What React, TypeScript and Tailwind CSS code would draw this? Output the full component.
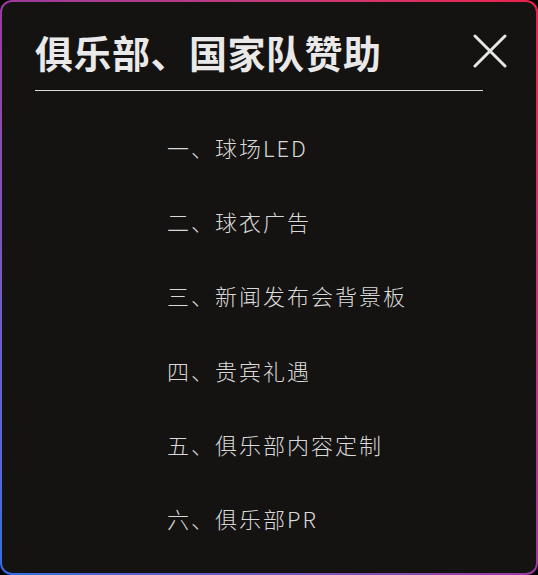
import React from "react";

const items = [
  "一、球场LED",
  "二、球衣广告",
  "三、新闻发布会背景板",
  "四、贵宾礼遇",
  "五、俱乐部内容定制",
  "六、俱乐部PR",
];

export default function App() {
  return (
    <div className="w-[538px] h-[575px] bg-black">
      <div className="w-[538px] h-[575px] rounded-[12px] p-[2px] bg-gradient-to-bl from-[#ee1f4a] via-[#9b3a9e] to-[#2f6fe6]">
        <div
          className="w-full h-full rounded-[10px] bg-[#141312] overflow-hidden"
          style={{ fontFamily: '"Noto Sans CJK SC", "Noto Sans", sans-serif' }}
        >
          <div className="flex items-center justify-between pl-[33px] pr-[29px] pt-[24px] h-[76px]">
            <h1 className="text-[38px] font-bold leading-none text-[#e9e9e9] tracking-[0.5px]">
              俱乐部、国家队赞助
            </h1>
            <svg width="34" height="34" viewBox="0 0 34 34" className="text-[#e6e6e6] -mt-[3px]">
              <path d="M2 2 L32 32 M32 2 L2 32" stroke="currentColor" strokeWidth="3" strokeLinecap="round" />
            </svg>
          </div>
          <div className="ml-[33px] mt-[12px] w-[448px] h-px bg-[#dcdcdc]" />
          <ul className="pl-[165px] pt-[46px]">
            {items.map((t) => (
              <li
                key={t}
                className="h-[74.2px] leading-[20px] text-[22px] font-light tracking-[2px] text-[#d9d9d9]"
              >
                {t}
              </li>
            ))}
          </ul>
        </div>
      </div>
    </div>
  );
}
